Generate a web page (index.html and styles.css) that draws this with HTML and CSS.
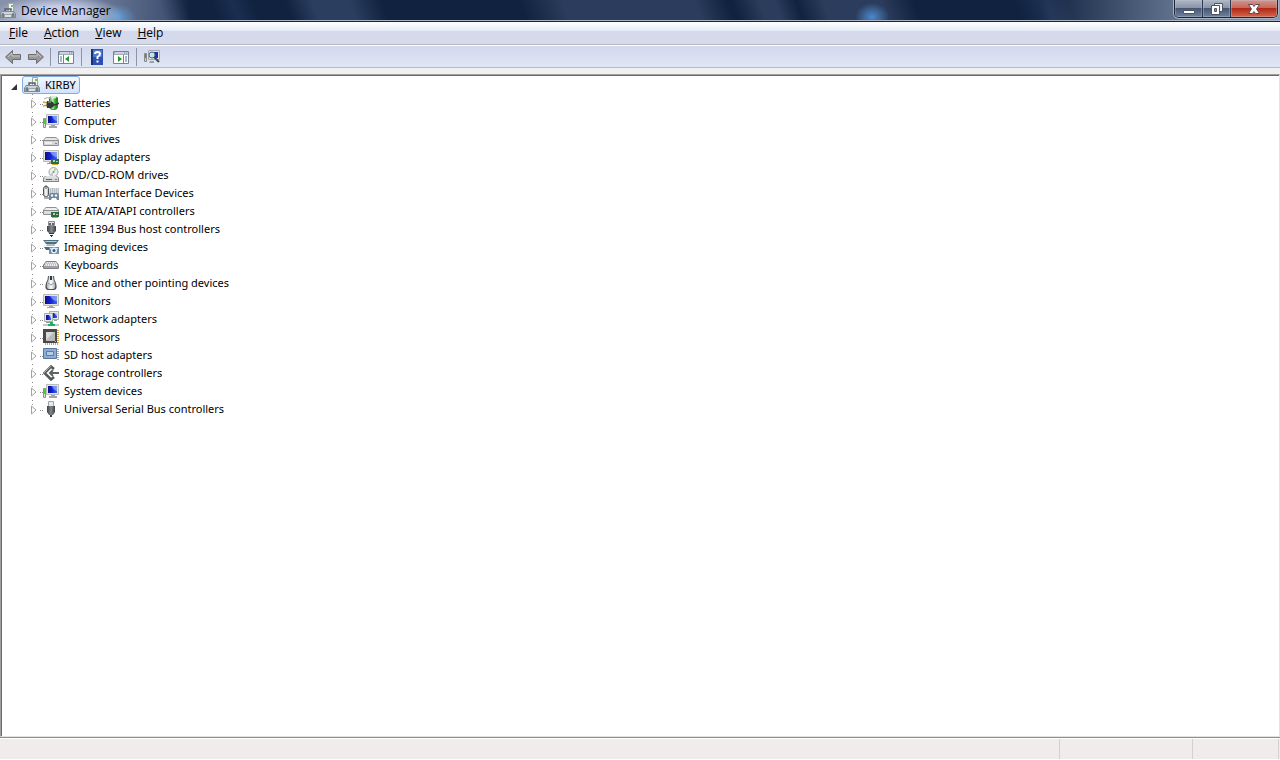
FILE: index.html
```html
<!DOCTYPE html>
<html lang="en">
<head>
<meta charset="utf-8">
<title>Device Manager</title>
<link rel="stylesheet" href="styles.css">
</head>
<body>
<svg class="defs" aria-hidden="true">
  <defs>
    <linearGradient id="screen" x1="0" y1="0" x2="1" y2="0"><stop offset="0" stop-color="#0c1080"/><stop offset=".45" stop-color="#1420d8"/><stop offset="1" stop-color="#3c6cf0"/></linearGradient>
    <linearGradient id="dark" x1="0" y1="0" x2="1" y2="0"><stop offset="0" stop-color="#3c3e42"/><stop offset=".5" stop-color="#85888c"/><stop offset="1" stop-color="#3c3e42"/></linearGradient>
    <linearGradient id="green" x1="0" y1="0" x2="1" y2="0"><stop offset="0" stop-color="#2ca030"/><stop offset=".4" stop-color="#c0f8a8"/><stop offset=".65" stop-color="#38b838"/><stop offset="1" stop-color="#1c7020"/></linearGradient>
    <linearGradient id="body" x1="0" y1="0" x2="1" y2="0"><stop offset="0" stop-color="#a8adb2"/><stop offset=".5" stop-color="#fff"/><stop offset="1" stop-color="#a8adb2"/></linearGradient>
    <symbol id="root" viewBox="0 0 16 16">
      <path d="M8.500.5h5v8h-5z" fill="#f2f2ee" stroke="#a2a6a6"/><path d="M11 2h2v2h-2z" fill="#70c840"/><path d="M5 8V6h6v2" fill="none" stroke="#55606a" stroke-width="1.500"/>
      <path d="M2 8h12l2 3v4H0v-4z" fill="#7c878e"/><path d="M2 9h11l2 2H1z" fill="#cdd3d6"/><path d="M1 11h14v3H1z" fill="#9ba6ac"/><path d="M3 10v4M13 10v4" stroke="#46515a" stroke-width="1"/><path d="M5 12h6v2H5z" fill="#dde2e4"/>
    </symbol>
    <symbol id="monitor" viewBox="0 0 16 16">
      <path d="M.5 1.500h15v11H.5z" fill="#e4e4de" stroke="#b9bab6"/><path d="M2 3h12v8H2z" fill="url(#screen)"/><path d="M7 3h7v5q-4 0-7-5z" fill="#a8c4fc" opacity=".6"/><path d="M6 13h4v1h2v1H4v-1h2z" fill="#a0a4a4"/>
    </symbol>
    <symbol id="card" viewBox="0 0 8 6"><path d="M0 0h8v5H0z" fill="#2c6c40"/><path d="M2 1h2v2H2zM5 2h2v1H5z" fill="#b4d4a8"/><path d="M1 5h6v1H1z" fill="#d6a734"/></symbol>
    <symbol id="battery" viewBox="0 0 16 16">
      <path d="M6.500 3q0-1.500 4-1.500t4 1.500v9q0 2.500-4 2.500t-4-2.500z" fill="url(#green)" stroke="#2a8030"/><ellipse cx="10.500" cy="2" rx="3" ry="1.500" fill="#dcecd8"/>
      <path d="M0 7l5 1M0 11l5-1" stroke="#c8a840" stroke-width="1.500"/><path d="M1 4q3-3 7 0" stroke="#aaa" fill="none"/><path d="M4 6h2q5 0 5 3.500T7 13H4q-1-3 0-7z" fill="#33383a"/><path d="M5 7h3" stroke="#b0b4b0"/><path d="M10 10q4 0 6-2" stroke="#333" stroke-width="1.500" fill="none"/>
    </symbol>
    <symbol id="computer" viewBox="0 0 16 16">
      <path d="M.5 5.500h2v9h-2z" fill="#d8e0d4" stroke="#8c948c"/><path d="M1 6h1v5H1z" fill="#40d828"/><path d="M3.500 1.500h12v10h-12z" fill="#e4e4de" stroke="#bcbdba"/><path d="M5 3h9v7H5z" fill="url(#screen)"/><path d="M9 3h5v5q-4-1-5-5z" fill="#a8c4fc" opacity=".6"/><path d="M8 12h4v1h2v2H6v-2h2z" fill="#a2a6a8"/>
    </symbol>
    <symbol id="disk" viewBox="0 0 16 16"><path d="M3 6h10l3 3v5q0 1-1 1H1q-1 0-1-1V9z" fill="#8c9093"/><path d="M3 7h10l2 2H1z" fill="#e5e6e6"/><path d="M1 10h14v4H1z" fill="#d3d5d8"/><path d="M2 11h7v2H2z" fill="#f0f0f0"/><path d="M12 12h2v1h-2z" fill="#53b642"/></symbol>
    <symbol id="display" viewBox="0 0 16 16"><use href="#monitor"/><use href="#card" x="8" y="10" width="8" height="6"/></symbol>
    <symbol id="dvd" viewBox="0 0 16 16"><circle cx="10.500" cy="5" r="4.500" fill="#ecefeb" stroke="#a4a6a8"/><path d="M11 1v4l3-3z" fill="#a8dc98"/><path d="M10 9V5L7 8z" fill="#c4c4dc"/><circle cx="10.500" cy="5" r="1" fill="#888"/><path d="M2 9h12l2 2v4H0v-4z" fill="#84888b"/><path d="M3 9h10l2 2H1z" fill="#e0e2e2"/><path d="M1 11h14v3H1z" fill="#d2d5d5"/><path d="M3 12h6v1H3z" fill="#63676a"/><path d="M12 12h2v1h-2z" fill="#4baf3c"/></symbol>
    <symbol id="hid" viewBox="0 0 16 16"><path d="M6 3h10v6H6z" fill="#b7bec4"/><path d="M6 4h10M6 6h10M6 8h10" stroke="#f4f6f7" stroke-dasharray="1 1"/><rect x=".5" y="1.500" width="5" height="10" rx="2" fill="url(#body)" stroke="#4a5158"/><path d="M3 0v4M1 13h5" stroke="#575d61" fill="none"/><path d="M6 10q1-3 3-2h4q3-1 3 3v4h-2l-1-2H9l-1 2H6z" fill="#6e88a2"/><circle cx="9" cy="10.500" r="1.200" fill="#eef4f8"/><circle cx="13" cy="10.500" r="1.200" fill="#eef4f8"/></symbol>
    <symbol id="ide" viewBox="0 0 16 16"><path d="M3 4h10l3 3v4q0 1-1 1H1q-1 0-1-1V7z" fill="#8c9093"/><path d="M3 5h10l2 2H1z" fill="#eee"/><path d="M1 8h14v3H1z" fill="#dcdedf"/><use href="#card" x="8" y="9" width="8" height="6"/></symbol>
    <symbol id="firewire" viewBox="0 0 16 16"><path d="M5.500.5h6v4h-6z" fill="#e0e2e3" stroke="#8b8f92"/><path d="M6 2h2v2H6zM9 2h2v2H9z" fill="#606468"/><path d="M4 5h9v5l-2 2H6l-2-2z" fill="url(#dark)"/><path d="M6 12h5v1H6zM7 14h3v1H7zM8 15h1v1H8z" fill="#303336"/></symbol>
    <symbol id="imaging" viewBox="0 0 16 16"><path d="M0 1h16l-3 4H3z" fill="#4e7080"/><path d="M1 2h13l-1 1H3z" fill="#b4d0d8"/><path d="M4 5h8v2H3z" fill="#a8bcc4"/><path d="M1 8h6v3H3z" fill="#486976"/><path d="M6 8h10v7H6z" fill="#6c90b0"/><path d="M7 9h8v1H7z" fill="#d4e4ec"/><circle cx="11" cy="11.500" r="3" fill="#e4f0f8"/><circle cx="11" cy="11.500" r="1.500" fill="#2e6090"/></symbol>
    <symbol id="keyboard" viewBox="0 0 16 16"><path d="M3 4h10l3 4v3q0 1-1 1H1q-1 0-1-1V8z" fill="#7c7f84"/><path d="M3 5h10l2 4H1z" fill="#eeeef0"/><path d="M3 6h10M2 8h12" stroke="#999ba2" stroke-dasharray="1 1"/><path d="M4 7h9" stroke="#b2b4ba" stroke-dasharray="1 1"/><path d="M1 10h14" stroke="#c4c5cc"/></symbol>
    <symbol id="mouse" viewBox="0 0 16 16"><path d="M5 1h6q0 4 2 7 2 7-2 7H5q-4 0-2-7 2-3 2-7z" fill="#4c5258"/><path d="M6 1h4q0 4 2 7 1 6-2 6H6q-3 0-2-6 2-3 2-7z" fill="url(#body)"/><path d="M7 1h2v4H7z" fill="#33383e"/><path d="M5 8l3 2 3-2" stroke="#90979e" fill="none"/></symbol>
    <symbol id="network" viewBox="0 0 16 16"><path d="M6.500.5h9v8h-9z" fill="#e8e8e2" stroke="#a9adab"/><path d="M8 2h6v5H8z" fill="url(#screen)"/><path d="M1.500 2.500h8v8h-8z" fill="#e8e8e2" stroke="#a9adab"/><path d="M3 4h5v5H3z" fill="url(#screen)"/><path d="M6 4h2v3zM11 2h3v3z" fill="#a8c4fc"/><path d="M3 11h5v1H3zM11 9h3v1h-3z" fill="#989e9c"/><path d="M7 11h3v2h2v2H5v-2h2z" fill="#20b060"/><path d="M0 14h5M12 14h4" stroke="#8b9390"/></symbol>
    <symbol id="cpu" viewBox="0 0 16 16"><path d="M15 1v14H1" fill="none" stroke="#d2a448" stroke-width="2" stroke-dasharray="1 1"/><path d="M0 0h14v14H0z" fill="#484a4a"/><path d="M3 3h9v9H3z" fill="#b8b9b8"/><path d="M3 3h8l-8 8z" fill="#dadada"/><path d="M12 12h1v1h-1z" fill="#d0b050"/></symbol>
    <symbol id="sd" viewBox="0 0 16 16"><path d="M15 2v11" stroke="#b8a870" stroke-width="2" stroke-dasharray="1 1"/><path d="M.5 1.500h13v10H.5z" fill="#8cacd4" stroke="#5878a4"/><path d="M3.500 4.500h7v4h-7z" fill="#b4cce8" stroke="#5c7ca8"/></symbol>
    <symbol id="storage" viewBox="0 0 16 16"><path d="M11 4L8 1.500 1.500 8 8 14.500 11 12" fill="none" stroke="#545758" stroke-width="2.500"/><path d="M8 1L1 8" stroke="#a8aaaa"/><path d="M7 8h9M10 5L7 8l3 3" fill="none" stroke="#606364" stroke-width="2"/></symbol>
    <symbol id="usb" viewBox="0 0 16 16"><path d="M5.500.5h5v5h-5z" fill="#e8e9ea" stroke="#a2a5a8"/><path d="M4 5h8v6l-2 3H6l-2-3z" fill="url(#dark)"/><path d="M7 14h2v2H7z" fill="#404346"/></symbol>
    <symbol id="twisty" viewBox="0 0 8 10"><path d="M1.500 1v8l4.500-4z" fill="#fff" stroke="#a2a2a2"/></symbol>
  </defs>
</svg>
<div class="window">
  <header class="titlebar">
    <svg class="icon"><use href="#root"/></svg>
    <h1 class="title">Device Manager</h1>
    <div class="caption">
      <button class="cap" aria-label="Minimize"><svg class="glyph" viewBox="0 0 14 14"><path d="M1.500 8.500h11v3h-11z" fill="#fff" stroke="#4e5665"/></svg></button>
      <button class="cap" aria-label="Restore"><svg class="glyph" viewBox="0 0 14 14"><path d="M4.500 1.500h8v8h-8z" fill="#eee" stroke="#4e5665"/><path d="M1.500 3.500h8v9h-8z" fill="#fff" stroke="#4e5665"/><path d="M4.500 6.500h2v3h-2z" fill="#8693aa" stroke="#4e5665"/></svg></button>
      <button class="cap close" aria-label="Close"><svg class="glyph" viewBox="0 0 14 14"><path d="M1.500 2.500h4L7 4.500l1.500-2h4L9.500 7l3 4.500h-4L7 9.500l-1.500 2h-4l3-4.500z" fill="#fff" stroke="#5f4a52"/></svg></button>
    </div>
  </header>
  <nav class="menubar">
    <button class="menu"><u>F</u>ile</button>
    <button class="menu"><u>A</u>ction</button>
    <button class="menu"><u>V</u>iew</button>
    <button class="menu"><u>H</u>elp</button>
  </nav>
  <div class="toolbar" role="toolbar" aria-label="Standard">
    <button class="tool arrow" aria-label="Back"><svg class="icon" viewBox="0 0 16 16"><path d="M.5 8l7-6.500v4h8v5h-8v4z" fill="#989898" stroke="#6c6c6c"/><path d="M3 8l4-4v3h8" fill="none" stroke="#c2c2c2"/></svg></button>
    <button class="tool arrow" aria-label="Forward"><svg class="icon" viewBox="0 0 16 16"><path d="M15.500 8l-7-6.500v4h-8v5h8v4z" fill="#989898" stroke="#6c6c6c"/><path d="M1 7h8V4l4 4" fill="none" stroke="#c2c2c2"/></svg></button>
    <span class="sep"></span>
    <button class="tool" aria-label="Show console tree"><svg class="icon" viewBox="0 0 16 16"><path d="M.5 2.500h15v12H.5z" fill="#fff" stroke="#78838f"/><path d="M1 3h14v3H1z" fill="#a0acb8"/><path d="M2 4h9M12 4h1M14 4h1" stroke="#f6f8fa"/><path d="M5.500 6v8" stroke="#78838f"/><path d="M2 8h2M2 10h2M2 12h2" stroke="#3d78b8"/><path d="M11 7v6L7 10z" fill="#26962b"/></svg></button>
    <span class="sep"></span>
    <button class="tool" aria-label="Help"><svg class="icon" viewBox="0 0 16 16"><path d="M2 0h12v16H2z" fill="#2c50b4"/><path d="M2 0h2v16H2z" fill="#183478"/><path d="M4 1h9v7H4z" fill="#4d79d4"/><path d="M6 5q0-2 2.500-2T11 5q0 1.500-2.500 3v2M8.500 11.500v2" fill="none" stroke="#fff" stroke-width="2"/></svg></button>
    <button class="tool" aria-label="Show action pane"><svg class="icon" viewBox="0 0 16 16"><path d="M.5 2.500h15v12H.5z" fill="#fff" stroke="#78838f"/><path d="M1 3h14v3H1z" fill="#a0acb8"/><path d="M2 4h9M12 4h1M14 4h1" stroke="#f6f8fa"/><path d="M10.500 6v8" stroke="#78838f"/><path d="M12 8h2M12 10h2M12 12h2" stroke="#3d78b8"/><path d="M5 7v6l4-3z" fill="#26962b"/></svg></button>
    <span class="sep"></span>
    <button class="tool" aria-label="Scan for hardware changes"><svg class="icon" viewBox="0 0 16 16"><path d="M.5 4.500h2v8h-2z" fill="#c5cdc8" stroke="#858d89"/><path d="M1 5h1v4H1z" fill="#39a72f"/><path d="M4.500 1.500h11v9h-11z" fill="#e0e2df" stroke="#a6acad"/><path d="M6 3h8v6H6z" fill="#1830b8"/><circle cx="8" cy="6" r="3" fill="#c2e2f6" stroke="#566a7b"/><path d="M10 8l5 5" stroke="#3c4a55" stroke-width="2"/><path d="M6 12h4v2H5z" fill="#9da3a5"/></svg></button>
  </div>
  <main class="pane">
    <ul class="tree" role="tree" aria-label="Devices">
      <li role="treeitem" aria-expanded="true">
        <div class="root"><button class="twist" aria-label="Collapse"><svg class="open" viewBox="0 0 6 6"><path d="M6 0v6H0z" fill="#333"/></svg></button><span class="selected"><svg class="icon"><use href="#root"/></svg><span class="label">KIRBY</span></span></div>
        <ul class="branch" role="group">
          <li class="row" role="treeitem"><button class="twist" aria-label="Expand"><svg class="shut"><use href="#twisty"/></svg></button><svg class="icon"><use href="#battery"/></svg><span class="label">Batteries</span></li>
          <li class="row" role="treeitem"><button class="twist" aria-label="Expand"><svg class="shut"><use href="#twisty"/></svg></button><svg class="icon"><use href="#computer"/></svg><span class="label">Computer</span></li>
          <li class="row" role="treeitem"><button class="twist" aria-label="Expand"><svg class="shut"><use href="#twisty"/></svg></button><svg class="icon"><use href="#disk"/></svg><span class="label">Disk drives</span></li>
          <li class="row" role="treeitem"><button class="twist" aria-label="Expand"><svg class="shut"><use href="#twisty"/></svg></button><svg class="icon"><use href="#display"/></svg><span class="label">Display adapters</span></li>
          <li class="row" role="treeitem"><button class="twist" aria-label="Expand"><svg class="shut"><use href="#twisty"/></svg></button><svg class="icon"><use href="#dvd"/></svg><span class="label">DVD/CD-ROM drives</span></li>
          <li class="row" role="treeitem"><button class="twist" aria-label="Expand"><svg class="shut"><use href="#twisty"/></svg></button><svg class="icon"><use href="#hid"/></svg><span class="label">Human Interface Devices</span></li>
          <li class="row" role="treeitem"><button class="twist" aria-label="Expand"><svg class="shut"><use href="#twisty"/></svg></button><svg class="icon"><use href="#ide"/></svg><span class="label">IDE ATA/ATAPI controllers</span></li>
          <li class="row" role="treeitem"><button class="twist" aria-label="Expand"><svg class="shut"><use href="#twisty"/></svg></button><svg class="icon"><use href="#firewire"/></svg><span class="label">IEEE 1394 Bus host controllers</span></li>
          <li class="row" role="treeitem"><button class="twist" aria-label="Expand"><svg class="shut"><use href="#twisty"/></svg></button><svg class="icon"><use href="#imaging"/></svg><span class="label">Imaging devices</span></li>
          <li class="row" role="treeitem"><button class="twist" aria-label="Expand"><svg class="shut"><use href="#twisty"/></svg></button><svg class="icon"><use href="#keyboard"/></svg><span class="label">Keyboards</span></li>
          <li class="row" role="treeitem"><button class="twist" aria-label="Expand"><svg class="shut"><use href="#twisty"/></svg></button><svg class="icon"><use href="#mouse"/></svg><span class="label">Mice and other pointing devices</span></li>
          <li class="row" role="treeitem"><button class="twist" aria-label="Expand"><svg class="shut"><use href="#twisty"/></svg></button><svg class="icon"><use href="#monitor"/></svg><span class="label">Monitors</span></li>
          <li class="row" role="treeitem"><button class="twist" aria-label="Expand"><svg class="shut"><use href="#twisty"/></svg></button><svg class="icon"><use href="#network"/></svg><span class="label">Network adapters</span></li>
          <li class="row" role="treeitem"><button class="twist" aria-label="Expand"><svg class="shut"><use href="#twisty"/></svg></button><svg class="icon"><use href="#cpu"/></svg><span class="label">Processors</span></li>
          <li class="row" role="treeitem"><button class="twist" aria-label="Expand"><svg class="shut"><use href="#twisty"/></svg></button><svg class="icon"><use href="#sd"/></svg><span class="label">SD host adapters</span></li>
          <li class="row" role="treeitem"><button class="twist" aria-label="Expand"><svg class="shut"><use href="#twisty"/></svg></button><svg class="icon"><use href="#storage"/></svg><span class="label">Storage controllers</span></li>
          <li class="row" role="treeitem"><button class="twist" aria-label="Expand"><svg class="shut"><use href="#twisty"/></svg></button><svg class="icon"><use href="#computer"/></svg><span class="label">System devices</span></li>
          <li class="row" role="treeitem"><button class="twist" aria-label="Expand"><svg class="shut"><use href="#twisty"/></svg></button><svg class="icon"><use href="#usb"/></svg><span class="label">Universal Serial Bus controllers</span></li>
        </ul>
      </li>
    </ul>
  </main>
  <footer class="status"><span class="cell wide"></span><span class="cell mid"></span><span class="cell end"></span></footer>
</div>
</body>
</html>
```
FILE: styles.css
```css
* { box-sizing: border-box; }
body { margin: 0; background: #f0f0f0; color: #000; font: 11px/18px "Noto Sans", "Open Sans", sans-serif; }
button { margin: 0; padding: 0; border: 0; background: none; color: inherit; font: inherit; }
ul { margin: 0; padding: 0; list-style: none; }
.defs { position: absolute; width: 0; height: 0; }
.icon { display: block; flex: none; width: 16px; height: 16px; }
.window { display: flex; flex-direction: column; min-height: 100vh; }

.titlebar {
  display: flex; align-items: center; height: 22px; padding-right: 2px;
  border-bottom: 1px solid #17233b; box-shadow: inset 0 -1px #a9b3c6;
  background:
    radial-gradient(ellipse 66px 20px at 58px 15px, #cfd6ee, #c3cbe5 45%, #cfd6ee00),
    radial-gradient(ellipse 18px 14px at 118px 18px, #5b9bd6, #5b9bd600),
    radial-gradient(ellipse 17px 14px at 872px 17px, #4b8aca, #4b8aca00),
    linear-gradient(90deg, #8692ab, #7885a1 80px, #33456400 190px),
    linear-gradient(270deg, #8a98ad, #6a7b96 90px, #33456400 240px),
    linear-gradient(70deg, #33456a 155px, #10223f 180px, #10223f 205px, #1a2e50 225px, #10223f 245px, #10223f 275px, #2b3e60 300px, #2b3e60 335px, #10223f 365px, #10223f 495px, #2b3c5c 535px, #2b3c5c 660px, #10223f 690px, #10223f 695px, #2b3c5c 720px, #2b3c5c 735px, #10223f 755px, #2b3c5c 780px, #2b3c5c 835px, #10223f 865px, #10223f 960px, #1f3254 990px, #10223f 1010px);
}
.title { flex: 1; margin: 0 0 0 5px; font: 12px/18px "Open Sans", "Noto Sans", sans-serif; }
.caption { display: flex; align-self: flex-start; height: 18px; border: 1px solid #1c2536; border-top: 0; border-radius: 0 0 5px 5px; overflow: hidden; box-shadow: 0 0 0 1px #a9b4c6; }
.cap { display: grid; place-items: center; width: 28px; border-right: 1px solid #2c374b; background: linear-gradient(#aeb7c5, #8592a6 50%, #465673 50%, #71829e); box-shadow: inset 0 0 0 1px #b9c3d066; }
.close { width: 46px; border-right: 0; background: linear-gradient(#d4978e, #c46254 50%, #b02a14 50%, #d8654a); }
.glyph { width: 14px; height: 14px; }

.menubar { display: flex; height: 24px; padding: 0 1px; border-bottom: 1px solid #fff; box-shadow: inset 0 -1px #b5b8b8; background: linear-gradient(#fff, #e4eaf6 9px, #d3d8eb 9px, #d5daed); }
.menu { padding: 0 8px 1px; font: 12px/20px "Open Sans", "Noto Sans", sans-serif; }
.toolbar { display: flex; align-items: center; height: 22px; padding-left: 5px; gap: 8px; border-bottom: 1px solid #b3bccb; background: linear-gradient(#d3d8ec, #dfe6f6); }
.arrow { margin-right: -1px; }
.sep { width: 1px; height: 18px; margin: 0 -1px; background: #8d94a3; }

.pane { flex: 1; margin-top: 6px; border: 1px solid; border-color: #a0a0a0 #e3e3e3 #e3e3e3 #a0a0a0; background: #fff; box-shadow: inset 1px 1px #696969; padding: 1px; }
.root, .row { display: flex; align-items: center; height: 18px; }
.root { padding-left: 6px; }
.root .twist { width: 14px; justify-content: start; padding-left: 3px; }
.twist { display: grid; place-items: center; flex: none; width: 12px; height: 18px; }
.open { width: 6px; height: 6px; margin-top: 3px; }
.shut { width: 8px; height: 10px; margin-top: 2px; }
.selected { display: flex; align-items: center; height: 18px; padding: 0 3px 0 1px; border: 1px solid #84acdd; border-radius: 3px; background: linear-gradient(#f2f7fe, #cfe3fc); }
.row { padding-left: 26px; background: linear-gradient(#888, #888) 30px 0 / 1px 1px no-repeat, linear-gradient(#aaa, #aaa) 30px 4px / 1px 1px no-repeat, linear-gradient(#888, #888) 38px 10px / 1px 1px no-repeat, linear-gradient(#888, #888) 40px 10px / 1px 1px no-repeat; }
.row .icon { margin-left: 3px; }
.label { margin-left: 5px; white-space: nowrap; }

.status { display: flex; height: 23px; border-top: 1px solid #8c8c8c; border-bottom: 1px solid #fff; background: #f0eceb; box-shadow: inset 0 1px #fff; }
.cell { margin-top: 1px; border-right: 1px solid #d2d0d0; }
.wide { flex: 1; }
.mid { width: 133px; }
.end { width: 86px; margin-right: 1px; }
```
